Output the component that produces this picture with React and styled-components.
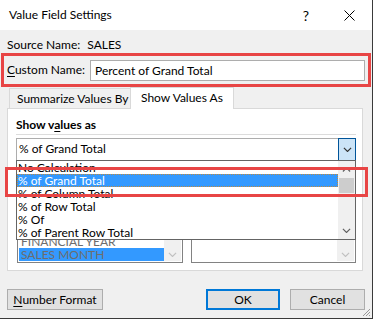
import React from "react";
import styled, { createGlobalStyle } from "styled-components";

const Global = createGlobalStyle`
  html, body { margin: 0; padding: 0; background: #fff; }
  body { font-family: "Segoe UI", Lato, "Noto Sans", sans-serif; font-size: 12px; color: #000; }
  * { box-sizing: border-box; }
`;

const Dialog = styled.div`
  width: 373px;
  height: 319px;
  display: flex;
  flex-direction: column;
  border-right: 1px solid #3a3a3a;
  border-bottom: 1px solid #3a3a3a;
  background: #f0f0f0;
  position: relative;
  overflow: hidden;
`;

const TitleBar = styled.div`
  height: 30px;
  flex: none;
  background: #fff;
  display: flex;
  align-items: center;
  padding-left: 9px;
`;

const Title = styled.div`
  flex: 1;
  font-size: 12px;
  line-height: 16px;
`;

const TitleButton = styled.div`
  width: ${(p) => p.$w}px;
  height: 30px;
  display: flex;
  align-items: center;
  justify-content: center;
  font-size: 14px;
  color: #000;
`;

const Body = styled.div`
  flex: 1;
  display: flex;
  flex-direction: column;
  padding-top: 7px;
`;

const SourceRow = styled.div`
  height: 16px;
  line-height: 16px;
  padding-left: 7px;
  display: flex;
  gap: 7px;
  white-space: nowrap;
`;

const RedBox = styled.div`
  border: 3px solid #e84545;
  margin: 0 1px 0 1px;
  padding: 3px 3px 3px 3px;
  display: flex;
  align-items: center;
  height: 34px;
`;

const Label = styled.div`
  width: 83px;
  line-height: 16px;
  white-space: nowrap;
`;

const U = styled.span`
  text-decoration: underline;
  text-underline-offset: 2px;
`;

const TextInput = styled.div`
  flex: 1;
  height: 21px;
  background: #fff;
  border: 1px solid #adadad;
  padding-left: 4px;
  line-height: 19px;
  white-space: nowrap;
`;

const TabStrip = styled.div`
  display: flex;
  align-items: flex-end;
  height: 22px;
  padding-left: 9px;
  position: relative;
  z-index: 1;
`;

const Tab = styled.div`
  height: ${(p) => (p.$active ? 22 : 21)}px;
  background: ${(p) => (p.$active ? "#fff" : "#f0f0f0")};
  border: 1px solid #d9d9d9;
  border-bottom: ${(p) => (p.$active ? "none" : "1px solid #d9d9d9")};
  width: ${(p) => p.$w}px;
  padding-left: ${(p) => (p.$active ? 10 : 7)}px;
  line-height: ${(p) => (p.$active ? 20 : 19)}px;
  margin-left: ${(p) => (p.$active ? -1 : 0)}px;
  white-space: nowrap;
`;

const Panel = styled.div`
  margin: -1px 9px 0 7px;
  height: 163px;
  background: #fff;
  border: 1px solid #d9d9d9;
  padding: 8px 6px 0 8px;
  display: flex;
  flex-direction: column;
`;

const Heading = styled.div`
  font-weight: bold;
  line-height: 16px;
  height: 16px;
`;

const Separator = styled.div`
  height: 1px;
  background: #dcdcdc;
  margin-top: 1px;
`;

const ComboWrap = styled.div`
  position: relative;
  margin-top: 3px;
`;

const Combo = styled.div`
  height: 23px;
  border: 1px solid #adadad;
  background: #fff;
  display: flex;
  align-items: stretch;
`;

const ComboText = styled.div`
  flex: 1;
  padding-left: 2px;
  line-height: 20px;
`;

const ComboButton = styled.div`
  width: 18px;
  margin: -1px -1px -1px 0;
  background: #cce4f7;
  border: 1px solid #005499;
  display: flex;
  align-items: center;
  justify-content: center;
`;

const DropList = styled.div`
  position: absolute;
  left: 0;
  right: 0;
  top: 22px;
  height: 80px;
  border: 1px solid #646464;
  background: #fff;
  display: flex;
  z-index: 5;
`;

const Items = styled.div`
  flex: 1;
  display: flex;
  flex-direction: column;
`;

const Item = styled.div`
  height: 13px;
  line-height: 13px;
  padding-left: 1px;
  white-space: nowrap;
  background: ${(p) => (p.$sel ? "#3399ff" : "transparent")};
  color: ${(p) => (p.$sel ? "#fff" : "#000")};
  outline: ${(p) => (p.$sel ? "1px dotted #c08a3e" : "none")};
  outline-offset: -1px;
`;

const ScrollBar = styled.div`
  width: 17px;
  background: #f0f0f0;
  display: flex;
  flex-direction: column;
  align-items: center;
`;

const ScrollArrow = styled.div`
  height: 17px;
  width: 17px;
  display: flex;
  align-items: center;
  justify-content: center;
`;

const Thumb = styled.div`
  width: 15px;
  height: 15px;
  background: #cdcdcd;
`;

const Spacer = styled.div`
  flex: 1;
`;

const BoxesRow = styled.div`
  display: flex;
  gap: 8px;
  margin-top: 40px;
  padding-left: 1px;
`;

const FieldBox = styled.div`
  width: ${(p) => p.$w}px;
  height: 62px;
  border: 1px solid #828282;
  background: #fff;
  display: flex;
  padding: 1px;
`;

const FieldItems = styled.div`
  flex: 1;
  display: flex;
  flex-direction: column;
  justify-content: flex-end;
  color: #6d6d6d;
`;

const FieldItem = styled.div`
  height: 13px;
  line-height: 13px;
  padding-left: 2px;
  white-space: nowrap;
  background: ${(p) => (p.$sel ? "#3399ff" : "transparent")};
`;

const FieldScroll = styled.div`
  width: 17px;
  background: #f0f0f0;
  display: flex;
  flex-direction: column;
  justify-content: flex-end;
  align-items: center;
  padding-bottom: 4px;
`;

const ButtonRow = styled.div`
  display: flex;
  align-items: center;
  padding: 18px 7px 0 7px;
`;

const Button = styled.div`
  width: ${(p) => p.$w}px;
  height: 21px;
  background: #e1e1e1;
  border: ${(p) => (p.$default ? "2px solid #0078d7" : "1px solid #adadad")};
  display: flex;
  align-items: center;
  justify-content: center;
  margin-left: ${(p) => p.$ml || 0}px;
  line-height: 16px;
  white-space: nowrap;
`;

const RedOverlay = styled.div`
  position: absolute;
  left: 5px;
  top: 167px;
  width: 363px;
  height: 30px;
  border: 3px solid #e84545;
  z-index: 10;
  pointer-events: none;
`;

const Grip = styled.svg`
  position: absolute;
  right: 1px;
  bottom: 1px;
`;

const Chevron = ({ dir = "down", color = "#333", size = 9 }) => (
  <svg width={size} height={size * 0.6} viewBox="0 0 10 6">
    <polyline
      points={dir === "down" ? "1,1 5,5 9,1" : "1,5 5,1 9,5"}
      fill="none"
      stroke={color}
      strokeWidth="1.3"
    />
  </svg>
);

export default function App() {
  return (
    <>
      <Global />
      <Dialog>
        <TitleBar>
          <Title>Value Field Settings</Title>
          <TitleButton $w={40}>?</TitleButton>
          <TitleButton $w={46}>
            <svg width="11" height="11" viewBox="0 0 11 11">
              <path d="M0.5 0.5 L10.5 10.5 M10.5 0.5 L0.5 10.5" stroke="#000" strokeWidth="1" />
            </svg>
          </TitleButton>
        </TitleBar>
        <Body>
          <SourceRow>
            <span>Source Name:</span>
            <span>SALES</span>
          </SourceRow>
          <RedBox>
            <Label>
              <U>C</U>ustom Name:
            </Label>
            <TextInput>Percent of Grand Total</TextInput>
          </RedBox>
          <TabStrip>
            <Tab $w={122}>Summarize Values By</Tab>
            <Tab $w={104} $active>Show Values As</Tab>
          </TabStrip>
          <Panel>
            <Heading>
              Show v<U>a</U>lues as
            </Heading>
            <Separator />
            <ComboWrap>
              <Combo>
                <ComboText>% of Grand Total</ComboText>
                <ComboButton>
                  <Chevron color="#333" />
                </ComboButton>
              </Combo>
              <DropList>
                <Items>
                  <Item>No Calculation</Item>
                  <Item $sel>% of Grand Total</Item>
                  <Item>% of Column Total</Item>
                  <Item>% of Row Total</Item>
                  <Item>% Of</Item>
                  <Item>% of Parent Row Total</Item>
                </Items>
                <ScrollBar>
                  <ScrollArrow>
                    <Chevron dir="up" color="#606060" />
                  </ScrollArrow>
                  <Thumb />
                  <Spacer />
                  <ScrollArrow>
                    <Chevron color="#606060" />
                  </ScrollArrow>
                </ScrollBar>
              </DropList>
            </ComboWrap>
            <BoxesRow>
              <FieldBox $w={166}>
                <FieldItems>
                  <FieldItem>FINANCIAL YEAR</FieldItem>
                  <FieldItem $sel>SALES MONTH</FieldItem>
                </FieldItems>
                <FieldScroll>
                  <Chevron color="#c0c0c0" />
                </FieldScroll>
              </FieldBox>
              <FieldBox $w={166}>
                <FieldItems />
                <FieldScroll>
                  <Chevron color="#c0c0c0" />
                </FieldScroll>
              </FieldBox>
            </BoxesRow>
          </Panel>
          <ButtonRow>
            <Button $w={96}>
              <span>
                <U>N</U>umber Format
              </span>
            </Button>
            <Spacer />
            <Button $w={74} $default>OK</Button>
            <Button $w={75} $ml={10}>Cancel</Button>
          </ButtonRow>
        </Body>
        <RedOverlay />
        <Grip width="10" height="10" viewBox="0 0 10 10">
          <path d="M9 2 L2 9 M9 5 L5 9 M9 8 L8 9" stroke="#999" strokeWidth="1" />
        </Grip>
      </Dialog>
    </>
  );
}
